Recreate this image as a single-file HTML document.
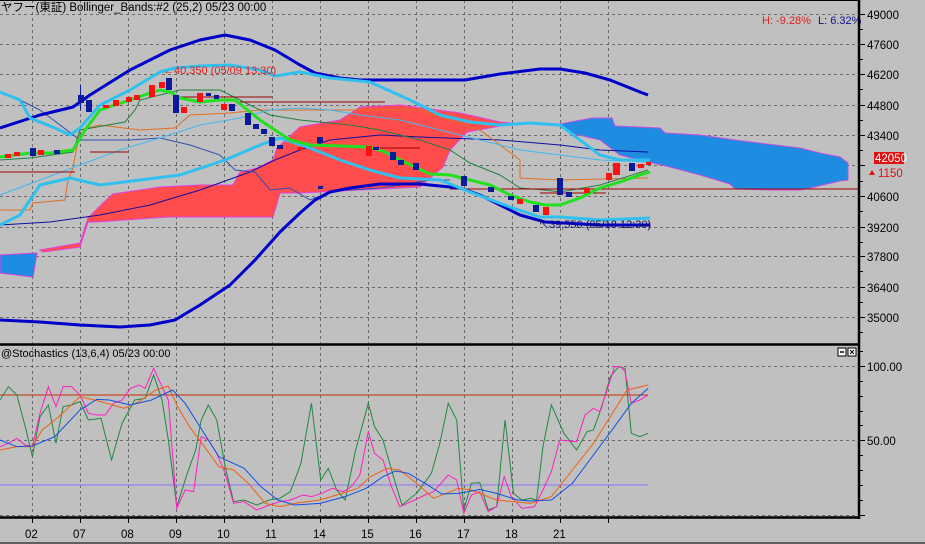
<!DOCTYPE html>
<html><head><meta charset="utf-8"><style>
html,body{margin:0;padding:0;background:#c0c0c0;width:925px;height:544px;overflow:hidden}
svg{display:block}
text{font-family:"Liberation Sans","Noto Sans CJK JP",sans-serif}
</style></head><body>
<svg width="925" height="544" viewBox="0 0 925 544" xmlns="http://www.w3.org/2000/svg">
<rect width="925" height="544" fill="#c0c0c0"/>
<!-- grid main -->
<g stroke="#6a6a6a" stroke-width="1" stroke-dasharray="3,3" fill="none">
<path d="M0 14.5H858M0 44.5H858M0 74.5H858M0 105.5H858M0 135.5H858M0 165.5H858M0 196.5H858M0 227.5H858M0 256.5H858M0 287.5H858M0 317.5H858"/>
<path d="M32.5 0V343M80.5 0V343M128.5 0V343M176.5 0V343M224.5 0V343M272.5 0V343M320.5 0V343M368.5 0V343M416.5 0V343M464.5 0V343M512.5 0V343M560.5 0V343M608.5 0V343"/>
<path d="M0 366.5H858M0 440.5H858M0 515.5H858"/>
<path d="M32.5 347V517M80.5 347V517M128.5 347V517M176.5 347V517M224.5 347V517M272.5 347V517M320.5 347V517M368.5 347V517M416.5 347V517M464.5 347V517M512.5 347V517M560.5 347V517M608.5 347V517"/>
</g>
<!-- clouds -->
<polygon fill="#ff4c4c" stroke="#e040e0" stroke-width="1" points="40,250 80,243 88,218 103,203 113,194 160,187 200,185 233,185 240,172 257,168 273,160 277,148 300,127 340,120 360,107 400,105 460,113 500,122 520,124 500,126 467,132 450,150 443,167 420,187 360,190 300,193 280,193 273,217 167,217 97,222 88,222 80,247 43,252"/>
<polygon fill="#1e8ce0" stroke="#d040e0" stroke-width="1" points="0,255 37,253 33,277 0,273"/>
<polygon fill="#1e8ce0" stroke="#c050e0" stroke-width="1" points="560,124 592,118 612,118 615,126 660,128 665,133 700,135 735,140 775,145 800,148 820,153 840,157 848,163 848,180 840,181 810,188 800,190 770,190 735,189 730,184 700,175 670,167 640,160 620,155 600,140 570,133"/>
<!-- thin lines -->
<g fill="none" stroke-width="1">
<polyline stroke="#1010a0" points="0,225 50,222 100,215 150,205 200,190 250,172 275,160 300,150 330,140 380,135 420,137 500,140 560,145 600,150 648,152"/>
<polyline stroke="#3050b0" points="0,92 20,100 40,110 60,125 80,140 100,140 130,140 160,138 190,145 220,155 235,170 255,172 270,190 290,188 310,200 335,190 350,190 380,188 400,185 430,180 450,180"/>
<polyline stroke="#e07020" points="0,210 30,210 33,203 65,200 68,180 73,168 80,130 100,125 140,130 175,128 190,115 230,113 260,110 300,110 340,110 420,110 480,130 520,160 520,178 560,180 648,178"/>
<polyline stroke="#208040" points="0,160 30,158 73,152 80,130 125,122 135,110 140,100 180,90 220,90 250,105 270,115 300,120 350,125 380,130 420,140 450,150 470,163 500,175 520,188 545,190 560,192 600,185 648,170"/>
<polyline stroke="#40b8f0" points="0,195 40,180 80,165 120,150 160,138 200,125 240,118 270,110 300,108 330,110 360,115 400,120 440,130 480,140 520,150 560,155 600,160 648,162"/>
<path stroke="#a00000" d="M0 172H75M450 189H858M180 97H272M90 152H128M240 102H385M380 148H420M540 193H606"/>
</g>
<!-- bollinger -->
<g fill="none" stroke-linejoin="round">
<polyline stroke="#0000c8" stroke-width="3" points="0,128 40,115 73,107 90,95 130,70 170,50 200,40 225,35 250,40 275,50 300,65 315,73 340,78 360,80 440,80 465,80 500,74 540,69 560,69 585,73 610,80 640,92 648,95"/>
<polyline stroke="#0000c8" stroke-width="3" points="0,320 40,322 80,325 120,327 150,325 175,320 200,305 230,285 255,260 280,232 300,213 315,200 330,192 350,188 380,184 420,184 460,188 480,195 500,205 520,215 545,222 600,225 650,225"/>
<polyline stroke="#30c0f0" stroke-width="3" points="0,92 20,100 30,118 55,128 70,135 80,128 100,105 130,90 160,72 175,68 200,66 230,65 260,70 275,76 300,72 330,78 370,82 410,100 440,115 470,122 500,125 530,123 560,125 580,140 600,155 620,160 650,160"/>
<polyline stroke="#30c0f0" stroke-width="3" points="0,225 20,215 30,200 40,185 70,178 100,185 140,180 180,175 225,160 260,145 280,138 310,148 340,160 370,170 400,178 440,180 470,192 510,207 540,217 560,217 600,220 650,218"/>
<polyline stroke="#20e020" stroke-width="3" points="0,157 15,155 30,153 50,153 73,150 85,130 100,110 115,105 130,100 150,93 160,90 170,92 180,98 200,102 220,100 235,100 245,108 260,120 275,130 290,140 310,145 340,146 370,147 385,152 400,160 415,167 430,174 450,175 470,180 490,185 510,195 530,202 545,205 560,205 580,198 600,188 620,182 640,175 650,172"/>
</g>
<!-- candles -->
<g fill="#0a1a9a">
<rect x="78" y="95" width="6" height="8"/><rect x="80" y="85" width="1" height="25"/>
<rect x="86" y="100" width="6" height="12"/><rect x="166" y="78" width="6" height="12"/>
<rect x="173" y="95" width="6" height="18"/><rect x="206" y="93" width="5" height="3"/>
<rect x="214" y="95" width="5" height="4"/><rect x="229" y="104" width="6" height="7"/>
<rect x="245" y="113" width="6" height="12"/><rect x="253" y="124" width="6" height="5"/>
<rect x="261" y="129" width="6" height="5"/><rect x="269" y="137" width="6" height="9"/>
<rect x="277" y="145" width="6" height="4"/><rect x="317" y="137" width="6" height="6"/>
<rect x="373" y="147" width="6" height="3"/><rect x="390" y="152" width="6" height="8"/>
<rect x="398" y="160" width="6" height="5"/><rect x="413" y="163" width="6" height="7"/>
<rect x="461" y="176" width="6" height="10"/><rect x="488" y="187" width="6" height="5"/>
<rect x="508" y="196" width="6" height="4"/><rect x="533" y="205" width="6" height="7"/>
<rect x="557" y="178" width="6" height="17"/><rect x="566" y="192" width="6" height="5"/>
<rect x="629" y="163" width="6" height="8"/><rect x="30" y="148" width="6" height="8"/>
<rect x="54" y="150" width="6" height="4"/><rect x="318" y="186" width="5" height="3"/>
</g>
<g fill="#ff1010">
<rect x="103" y="105" width="6" height="3"/><rect x="113" y="100" width="6" height="6"/>
<rect x="126" y="97" width="6" height="5"/><rect x="134" y="95" width="6" height="5"/>
<rect x="149" y="85" width="6" height="12"/><rect x="159" y="82" width="6" height="6"/>
<rect x="181" y="107" width="6" height="6"/><rect x="197" y="93" width="6" height="9"/>
<rect x="221" y="104" width="6" height="6"/><rect x="298" y="147" width="5" height="3"/>
<rect x="366" y="146" width="6" height="10"/><rect x="517" y="199" width="6" height="5"/>
<rect x="543" y="207" width="6" height="8"/><rect x="584" y="188" width="6" height="5"/>
<rect x="606" y="173" width="6" height="7"/><rect x="613" y="163" width="7" height="12"/>
<rect x="638" y="164" width="6" height="4"/><rect x="646" y="162" width="5" height="3"/>
<rect x="5" y="154" width="6" height="4"/><rect x="14" y="152" width="6" height="4"/>
<rect x="38" y="150" width="6" height="5"/>
</g>
<!-- annotations -->
<text x="163" y="74" font-size="11" fill="#e02020">←40,350 (05/09 13:30)</text>
<text x="538" y="228" font-size="11" fill="#101070">↖39,550 (05/18 12:30)</text>
<text x="1" y="11" font-size="11.5" fill="#000">ヤフー(東証) Bollinger_Bands:#2 (25,2) 05/23 00:00</text>
<text x="762" y="24" font-size="11" fill="#e02020">H: -9.28%</text>
<text x="818" y="24" font-size="11" fill="#101090">L: 6.32%</text>
<!-- stochastics -->
<g transform="translate(0,340) scale(0.42088,0.33333)" fill="none" stroke-width="1">
<path vector-effect="non-scaling-stroke" stroke="#c03000" d="M0 165H1540"/>
<path vector-effect="non-scaling-stroke" stroke="#9070ff" d="M0 435H1540"/>
<polyline vector-effect="non-scaling-stroke" stroke="#208840" points="0,180 20,140 40,165 60,260 77,350 95,230 115,195 133,310 150,200 170,195 190,185 210,240 240,235 265,360 290,250 320,180 345,175 365,105 385,180 400,300 420,500 445,400 465,330 478,240 495,195 515,240 535,380 555,485 580,480 610,495 640,480 665,475 690,455 715,370 740,190 762,420 780,385 800,450 820,480 845,330 875,190 890,260 910,300 935,410 955,495 990,460 1025,400 1045,310 1065,190 1085,240 1102,510 1120,430 1140,428 1160,510 1180,500 1200,240 1220,460 1240,480 1260,475 1275,480 1290,320 1310,195 1340,280 1370,330 1395,275 1410,270 1430,200 1450,110 1470,80 1485,85 1500,280 1520,290 1540,280"/>
<polyline vector-effect="non-scaling-stroke" stroke="#ff20c0" points="0,320 20,310 40,295 60,315 77,320 95,220 115,140 133,200 150,140 170,140 190,165 210,220 230,225 250,225 270,190 290,180 310,145 330,135 345,145 365,85 385,140 400,180 420,505 440,450 460,455 478,290 495,300 515,340 535,400 555,490 580,485 610,510 640,495 665,485 690,480 720,465 740,470 765,460 790,445 815,455 835,440 855,405 875,275 890,340 910,360 930,440 950,500 985,480 1010,465 1030,455 1065,405 1085,420 1102,520 1120,465 1140,455 1160,515 1180,500 1198,410 1215,470 1240,505 1270,500 1290,450 1310,395 1330,300 1370,305 1390,225 1410,205 1425,215 1440,160 1460,80 1475,80 1485,95 1500,190 1520,180 1540,165"/>
<polyline vector-effect="non-scaling-stroke" stroke="#f06010" points="0,330 40,320 77,320 100,270 140,230 190,170 240,185 295,205 330,185 370,150 400,138 420,195 450,260 480,310 520,380 555,390 590,430 630,490 665,500 700,490 760,480 800,465 850,445 880,410 920,385 950,390 990,430 1030,475 1060,460 1090,445 1120,450 1150,465 1180,480 1220,485 1260,490 1310,470 1360,390 1410,310 1450,230 1490,150 1540,135"/>
<polyline vector-effect="non-scaling-stroke" stroke="#1050e0" points="0,300 40,320 77,318 130,290 190,210 230,178 260,180 310,195 360,180 410,150 440,190 480,270 520,350 580,385 620,440 660,480 700,495 760,490 820,470 870,445 910,410 940,393 970,400 1010,430 1050,462 1090,460 1140,448 1180,460 1230,480 1260,483 1310,480 1360,430 1410,345 1460,260 1500,190 1540,145"/>
</g>
<text x="1" y="357" font-size="11" fill="#000">@Stochastics (13,6,4) 05/23 00:00</text>
<rect x="838" y="348" width="8" height="8" fill="#fff" stroke="#000"/><path d="M840 352H844" stroke="#000" stroke-width="1.5"/>
<rect x="848" y="348" width="8" height="8" fill="#fff" stroke="#000"/><path d="M850 350L854 354M854 350L850 354" stroke="#000"/>
<!-- frames -->
<path d="M859 0V519M0 344.5H860M0 517.5H860" stroke="#000" stroke-width="2.5" fill="none"/>
<path d="M0 0.5H860" stroke="#000" stroke-width="1"/>
<path d="M0 543H925" stroke="#000" stroke-width="1"/>
<!-- axis ticks -->
<g stroke="#000" stroke-width="1">
<path d="M859 14.5H865M859 44.5H865M859 74.5H865M859 105.5H865M859 135.5H865M859 165.5H865M859 196.5H865M859 227.5H865M859 256.5H865M859 287.5H865M859 317.5H865"/>
<path d="M859 29.5H863M859 59.5H863M859 89.5H863M859 120.5H863M859 150.5H863M859 181.5H863M859 211.5H863M859 242.5H863M859 271.5H863M859 302.5H863M859 332.5H863"/>
<path d="M859 351.5H863M859 366.5H865M859 381.5H863M859 396.5H863M859 411.5H863M859 425.5H863M859 440.5H865M859 455.5H863M859 470.5H863M859 485.5H863M859 500.5H863M859 515.5H865"/>
<path d="M32.5 518V523M80.5 518V523M128.5 518V523M176.5 518V523M224.5 518V523M272.5 518V523M320.5 518V523M368.5 518V523M416.5 518V523M464.5 518V523M512.5 518V523M560.5 518V523M608.5 518V523"/>
</g>
<g font-size="11.5" fill="#000">
<text x="867" y="19">49000</text><text x="867" y="49">47600</text><text x="867" y="79">46200</text>
<text x="867" y="110">44800</text><text x="867" y="140">43400</text><text x="867" y="201">40600</text>
<text x="867" y="232">39200</text><text x="867" y="261">37800</text><text x="867" y="292">36400</text>
<text x="867" y="322">35000</text><text x="867" y="371">100.00</text><text x="867" y="445">50.00</text>
</g>
<rect x="874" y="152" width="30" height="12" fill="#e01010"/>
<text x="875" y="162" font-size="11.5" fill="#fff">42050</text>
<path d="M869 175L872 170L875 175Z" fill="#e01010"/>
<text x="878" y="177" font-size="11.5" fill="#e01010">1150</text>
<g font-size="11.5" fill="#000">
<text x="25" y="538">02</text><text x="73" y="538">07</text><text x="121" y="538">08</text><text x="169" y="538">09</text>
<text x="217" y="538">10</text><text x="265" y="538">11</text><text x="313" y="538">14</text><text x="361" y="538">15</text>
<text x="409" y="538">16</text><text x="457" y="538">17</text><text x="505" y="538">18</text><text x="553" y="538">21</text>
</g>
</svg>
</body></html>
